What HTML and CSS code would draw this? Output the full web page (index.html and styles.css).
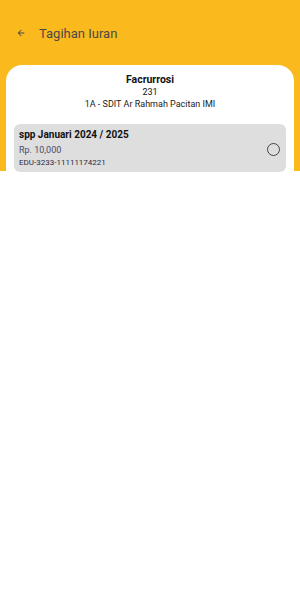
FILE: index.html
```html
<!DOCTYPE html>
<html>
<head>
<meta charset="utf-8">
<link rel="stylesheet" href="styles.css">
</head>
<body>
<div class="page">
  <header class="appbar">
    <div class="toolbar">
      <svg class="back" width="10" height="10" viewBox="0 0 24 24"><path d="M20 11H7.83l5.59-5.59L12 4l-8 8 8 8 1.41-1.41L7.83 13H20v-2z" fill="#4a4a4a"/></svg>
      <span class="title">Tagihan Iuran</span>
    </div>
  </header>
  <main class="panel">
    <div class="student">
      <div class="name">Facrurrosi</div>
      <div class="nis">231</div>
      <div class="school">1A - SDIT Ar Rahmah Pacitan IMI</div>
    </div>
    <div class="bill">
      <div class="bill-info">
        <div class="bill-title">spp Januari 2024 / 2025</div>
        <div class="bill-amount">Rp. 10,000</div>
        <div class="bill-code">EDU-3233-11111174221</div>
      </div>
      <span class="radio"></span>
    </div>
  </main>
</div>
</body>
</html>
```
FILE: styles.css
```css
* { box-sizing: border-box; }
html, body { margin: 0; padding: 0; background: #fff; }
body { font-family: Roboto, "Noto Sans", sans-serif; width: 300px; height: 608px; overflow: hidden; }
.page { position: relative; height: 608px; }
.appbar {
  background: #fab91d;
  height: 171px;
  padding-top: 22px;
}
.toolbar {
  display: flex;
  align-items: center;
  height: 22px;
  padding-left: 16px;
}
.back { margin-right: 13px; }
.title { font-size: 13px; color: #4a4a4a; }
.panel {
  margin: -106px 6px 0;
  background: #fff;
  border-radius: 16px 16px 0 0;
  padding: 7px 8px 0;
  position: relative;
  min-height: 400px;
}
.student { text-align: center; color: #111; }
.name { font-weight: 700; font-size: 10.5px; line-height: 13px; margin-top: 1px; }
.nis { font-size: 9px; line-height: 12px; }
.school { font-size: 9px; line-height: 12px; color: #222; }
.bill {
  margin-top: 14px;
  background: #dedede;
  border-radius: 6px;
  height: 48px;
  display: flex;
  align-items: center;
  padding: 0 6px 0 5px;
}
.bill-info { flex: 1; }
.bill-title { font-weight: 700; font-size: 10px; line-height: 14px; color: #111; }
.bill-amount { font-size: 9px; line-height: 14px; color: #4a4a6a; margin-top: 1px; }
.bill-code { font-size: 8px; line-height: 12px; color: #2a2a40; }
.radio {
  width: 13px; height: 13px;
  border: 1.5px solid #444;
  border-radius: 50%;
  margin-top: 3px;
}
```
